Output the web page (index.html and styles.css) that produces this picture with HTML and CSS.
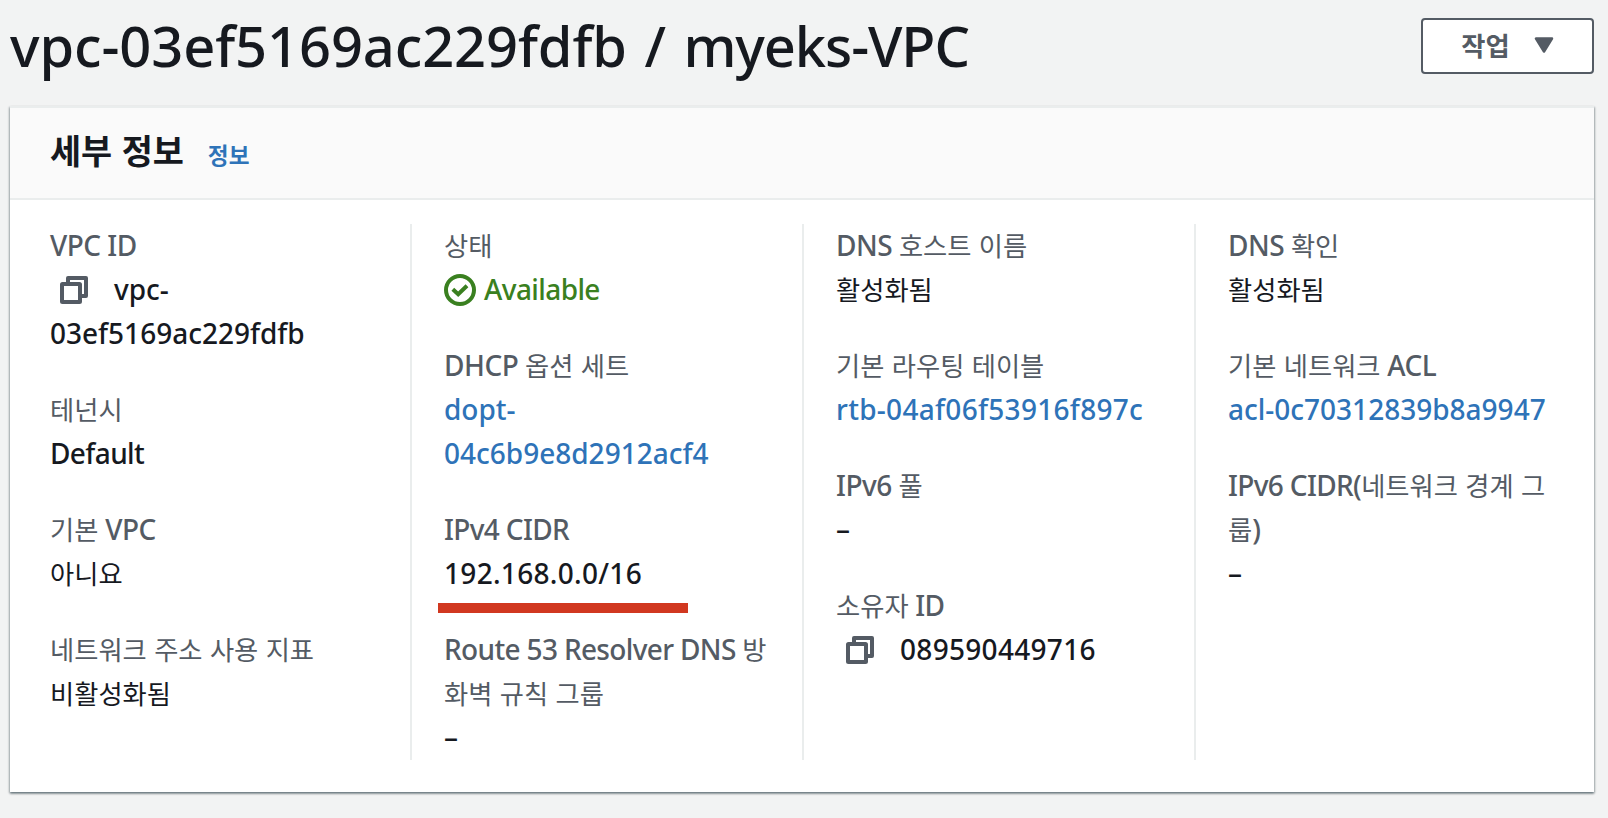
FILE: index.html
```html
<!DOCTYPE html>
<html lang="ko">
<head>
    <meta charset="utf-8">
    <title>myeks-VPC</title>
    <link rel="stylesheet" href="styles.css">
</head>
<body>
    <div class="header">
        <h1 class="title">vpc-03ef5169ac229fdfb / <span class="name">myeks-VPC</span></h1>
        <button class="actions">
            <span>작업</span>
            <svg class="caret" viewBox="0 0 20 16"><path d="M2 1.5h16L10 14.5z"/></svg>
        </button>
    </div>

    <div class="card">
        <div class="card-header">
            <h2 class="card-title">세부 정보</h2>
            <a class="info">정보</a>
        </div>
        <div class="columns">
            <div class="column">
                <div class="field">
                    <div class="label">VPC ID</div>
                    <div class="value id"><svg class="copy" viewBox="0 0 28 28"><rect x="2" y="8" width="18" height="18" rx="0.5"/><path d="M8 7V2h18v18h-5"/></svg>vpc-<br>03ef5169ac229fdfb</div>
                </div>
                <div class="field">
                    <div class="label"><span class="ko">테넌시</span></div>
                    <div class="value word">Default</div>
                </div>
                <div class="field">
                    <div class="label"><span class="ko">기본</span> VPC</div>
                    <div class="value"><span class="ko">아니요</span></div>
                </div>
                <div class="field">
                    <div class="label"><span class="ko">네트워크 주소 사용 지표</span></div>
                    <div class="value"><span class="ko">비활성화됨</span></div>
                </div>
            </div>

            <div class="column">
                <div class="field">
                    <div class="label"><span class="ko">상태</span></div>
                    <div class="value word status"><svg class="check" viewBox="0 0 32 32"><circle cx="16" cy="16" r="14"/><path d="M8.8 15.2l5.4 5 8.8-8.4"/></svg>Available</div>
                </div>
                <div class="field">
                    <div class="label">DHCP <span class="ko">옵션 세트</span></div>
                    <div class="value id link">dopt-<br>04c6b9e8d2912acf4</div>
                </div>
                <div class="field marked">
                    <div class="label long">IPv4 CIDR</div>
                    <div class="value number">192.168.0.0/16</div>
                </div>
                <div class="field">
                    <div class="label long">Route 53 Resolver DNS <span class="ko">방<br>화벽 규칙 그룹</span></div>
                    <div class="value">–</div>
                </div>
            </div>

            <div class="column">
                <div class="field">
                    <div class="label">DNS <span class="ko">호스트 이름</span></div>
                    <div class="value"><span class="ko">활성화됨</span></div>
                </div>
                <div class="field">
                    <div class="label"><span class="ko">기본 라우팅 테이블</span></div>
                    <div class="value number link">rtb-04af06f53916f897c</div>
                </div>
                <div class="field">
                    <div class="label">IPv6 <span class="ko">풀</span></div>
                    <div class="value">–</div>
                </div>
                <div class="field">
                    <div class="label long"><span class="ko">소유자</span> ID</div>
                    <div class="value number"><svg class="copy" viewBox="0 0 28 28"><rect x="2" y="8" width="18" height="18" rx="0.5"/><path d="M8 7V2h18v18h-5"/></svg>089590449716</div>
                </div>
            </div>

            <div class="column">
                <div class="field">
                    <div class="label">DNS <span class="ko">확인</span></div>
                    <div class="value"><span class="ko">활성화됨</span></div>
                </div>
                <div class="field">
                    <div class="label"><span class="ko">기본 네트워크</span> ACL</div>
                    <div class="value id link">acl-0c70312839b8a9947</div>
                </div>
                <div class="field">
                    <div class="label long">IPv6 CIDR(<span class="ko">네트워크 경계 그<br>룹</span>)</div>
                    <div class="value">–</div>
                </div>
            </div>
        </div>
    </div>
</body>
</html>
```
FILE: styles.css
```css
* {
    box-sizing: border-box;
}
body {
    margin: 0;
    height: 818px;
    overflow: hidden;
    background-color: #f2f3f3;
    color: #16191f;
    font-family: "Noto Sans", "Noto Sans CJK KR", sans-serif;
    font-size: 28px;
    font-weight: 500;
    line-height: 44px;
}
h1, h2 {
    margin: 0;
}

/* page heading */
.header {
    display: flex;
    justify-content: space-between;
    align-items: flex-start;
    height: 106px;
    padding: 17px 14px 0 10px;
}
.title {
    font-size: 56px;
    font-weight: 500;
    line-height: 56px;
    letter-spacing: -0.1px;
    word-spacing: 3px;
    white-space: nowrap;
}
.name {
    letter-spacing: -1.1px;
}
.actions {
    display: flex;
    justify-content: center;
    align-items: center;
    gap: 24px;
    width: 173px;
    height: 56px;
    margin-top: 1px;
    padding: 0 0 3px;
    border: 2px solid #545b64;
    border-radius: 4px;
    background-color: #fff;
    color: #545b64;
    font-family: "Noto Sans CJK KR", sans-serif;
    font-size: 26.3px;
    font-weight: 700;
}
.caret {
    width: 20px;
    height: 16px;
    fill: #545b64;
    stroke: #545b64;
    stroke-width: 2.5;
    stroke-linejoin: round;
}

/* details card */
.card {
    width: 1584px;
    height: 686px;
    margin-left: 10px;
    border-top: 2px solid #eaeded;
    background-color: #fff;
    box-shadow: 0 2px 2px 0 rgba(0, 28, 36, 0.3), 1px 1px 2px 0 rgba(0, 28, 36, 0.25), -1px 1px 2px 0 rgba(0, 28, 36, 0.25);
}
.card-header {
    display: flex;
    align-items: baseline;
    gap: 24px;
    height: 92px;
    padding: 20px 40px 0;
    border-bottom: 2px solid #eaeded;
    background-color: #fafafa;
    font-family: "Noto Sans CJK KR", sans-serif;
}
.card-title {
    font-size: 33.8px;
    font-weight: 700;
}
.info {
    color: #2e73b8;
    font-size: 22.6px;
    font-weight: 700;
}
.columns {
    display: grid;
    grid-template-columns: 360px 392px 392px 1fr;
    padding: 24px 0 0 40px;
}
.column {
    display: flex;
    flex-direction: column;
    gap: 32px;
    height: 536px;
}
.column + .column {
    padding-left: 32px;
    border-left: 2px solid #eaeded;
}
.field {
    margin-top: -1px;
    margin-bottom: 1px;
    white-space: nowrap;
}
.label {
    color: #545b64;
    letter-spacing: -0.5px;
}
.long {
    letter-spacing: -0.65px;
}
.ko {
    font-family: "Noto Sans CJK KR", sans-serif;
    font-size: 26.3px;
    font-weight: 400;
    line-height: 1;
    letter-spacing: 0;
}
.number {
    letter-spacing: 0.3px;
}
.word {
    letter-spacing: -0.6px;
}
.link {
    color: #2e73b8;
}
.copy {
    width: 28px;
    height: 28px;
    margin: 0 26px 0 10px;
    vertical-align: -4px;
    fill: none;
    stroke: #545b64;
    stroke-width: 4;
    stroke-linejoin: round;
}
.status {
    color: #3a8020;
}
.check {
    width: 32px;
    height: 32px;
    margin-right: 8px;
    vertical-align: -6px;
    fill: none;
    stroke: #3a8020;
    stroke-width: 4;
}

/* red underline below the CIDR */
.marked {
    position: relative;
}
.marked::after {
    content: "";
    position: absolute;
    left: -6px;
    top: 96px;
    width: 250px;
    height: 10px;
    background-color: #d13820;
}
```
